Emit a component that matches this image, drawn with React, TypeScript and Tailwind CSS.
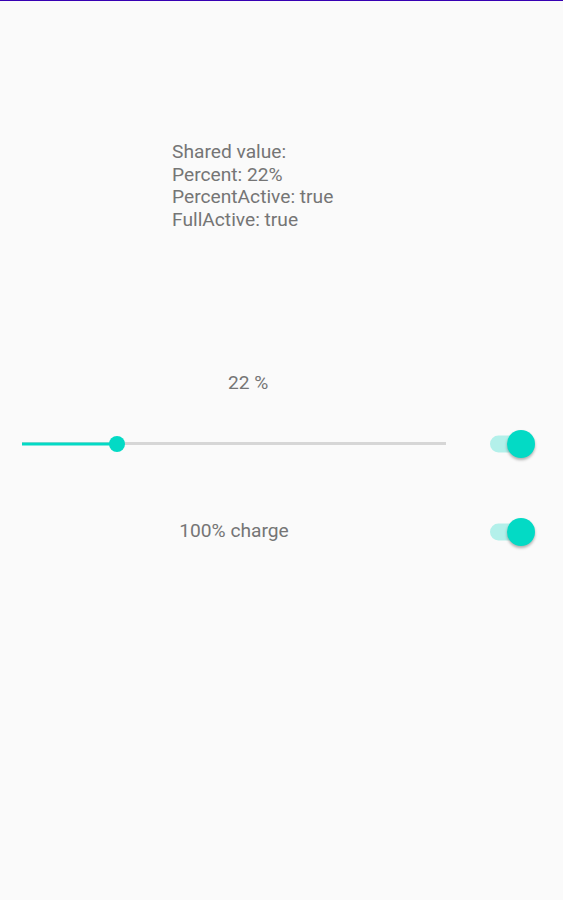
export default function App() {
  const percent = 22;

  return (
    <div
      className="min-h-[900px] w-full bg-[#fafafa] text-[#757575]"
      style={{ fontFamily: "Roboto, 'Noto Sans', sans-serif" }}
    >
      <div className="h-px w-full bg-[#3700b3]" />

      {/* shared value readout */}
      <div className="pl-[172px] pt-[140px] text-[19.2px] leading-[22.5px]">
        <div>Shared value:</div>
        <div>Percent: {percent}%</div>
        <div>PercentActive: true</div>
        <div>FullActive: true</div>
      </div>

      <div className="mt-[141px] pl-[228px] text-[19.2px] leading-[22.5px]">{percent} %</div>

      {/* slider row */}
      <div className="mt-[35px] flex items-center pr-[28px]">
        <div className="relative ml-[22px] flex h-7 w-[424px] items-center">
          <div className="h-[3px] w-full bg-[#d6d6d6]" />
          <div className="absolute left-0 top-1/2 h-[3px] w-[95px] -translate-y-1/2 bg-[#03dac5]" />
          <div className="absolute left-[87px] top-1/2 h-4 w-4 -translate-y-1/2 rounded-full bg-[#03dac5]" />
        </div>
        <div className="ml-auto">
          <Switch />
        </div>
      </div>

      {/* charge row */}
      <div className="mt-[60px] flex items-center pr-[28px]">
        <div className="ml-[22px] w-[424px] text-center text-[19.2px] leading-[22.5px]">100% charge</div>
        <div className="ml-auto">
          <Switch />
        </div>
      </div>
    </div>
  );
}

function Switch() {
  return (
    <div className="relative h-7 w-[45px]">
      <div className="absolute left-0 top-1/2 h-[17px] w-[34px] -translate-y-1/2 rounded-full bg-[#b3f0ea]" />
      <div className="absolute right-0 top-0 h-7 w-7 rounded-full bg-[#03dac5] shadow-[0_2px_3px_rgba(0,0,0,0.3)]" />
    </div>
  );
}
